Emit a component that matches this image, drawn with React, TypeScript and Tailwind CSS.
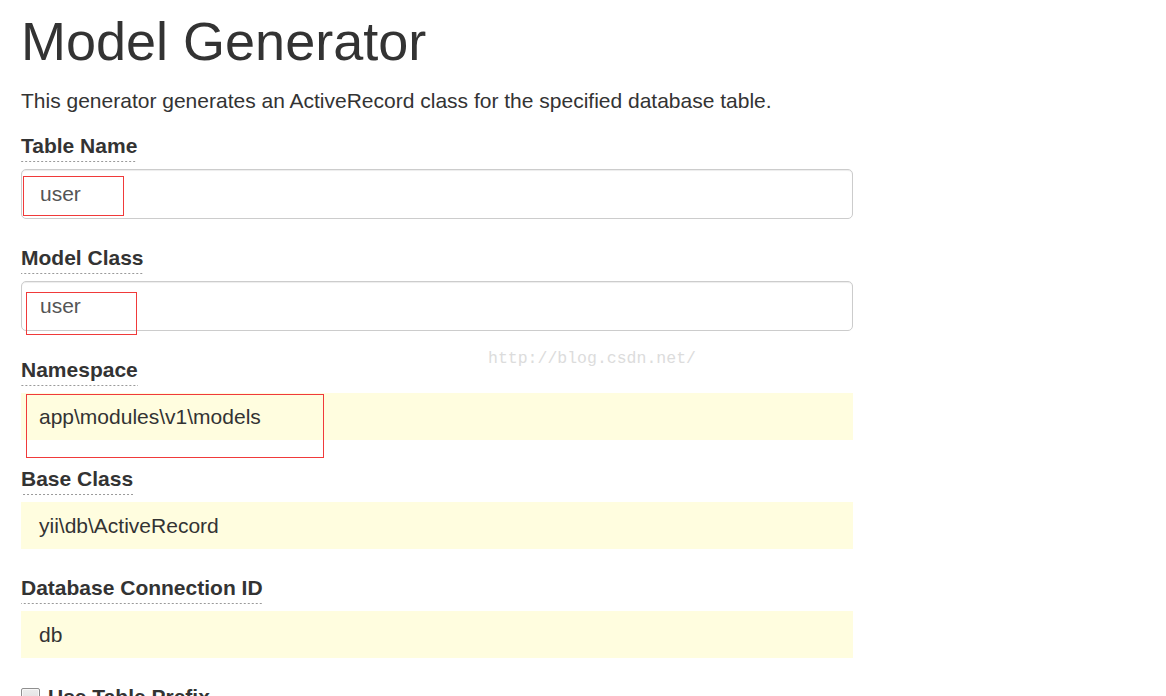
import React from "react";

const dash =
  "inline-block text-[21px] font-bold leading-[27px] pb-[3px] bg-[linear-gradient(to_right,#9a9a9a_50%,transparent_50%)] bg-[length:4px_1px] bg-repeat-x bg-bottom";

function Label({ text, first }: { text: string; first?: boolean }) {
  return (
    <div className={first ? "mt-[16px]" : "mt-[25px]"}>
      <span className={dash}>{text}</span>
    </div>
  );
}

function RedBox({ cls }: { cls: string }) {
  return <div className={"absolute border border-[#f03a3a] pointer-events-none " + cls} />;
}

export default function App() {
  return (
    <div className="relative h-[696px] w-[1166px] overflow-hidden bg-white text-[#333] font-['Liberation_Sans',Arial,sans-serif]">
      <div className="pl-[21px] pt-[11px] w-[853px]">
        <h1 className="text-[54px] leading-[60px] font-normal">Model Generator</h1>
        <p className="mt-[15px] text-[21px] leading-[30px]">
          This generator generates an ActiveRecord class for the specified database table.
        </p>

        <Label text="Table Name" first />
        <div className="relative mt-[7px] h-[50px] w-[832px] rounded-[5px] border border-[#cccccc] shadow-[inset_0_1px_1px_rgba(0,0,0,0.075)] flex items-center pl-[18px] text-[21px] text-[#555]">
          user
          <RedBox cls="left-[1px] top-[6px] w-[101px] h-[40px]" />
        </div>

        <Label text="Model Class" />
        <div className="relative mt-[7px] h-[50px] w-[832px] rounded-[5px] border border-[#cccccc] shadow-[inset_0_1px_1px_rgba(0,0,0,0.075)] flex items-center pl-[18px] text-[21px] text-[#555]">
          user
          <RedBox cls="left-[4px] top-[10px] w-[111px] h-[43px]" />
        </div>

        <Label text="Namespace" />
        <div className="relative mt-[7px] h-[47px] w-[832px] bg-[#fffddf] flex items-center pl-[18px] text-[21px] text-[#333]">
          app\modules\v1\models
          <RedBox cls="left-[5px] top-[1px] w-[298px] h-[64px]" />
        </div>

        <Label text="Base Class" />
        <div className="relative mt-[7px] h-[47px] w-[832px] bg-[#fffddf] flex items-center pl-[18px] text-[21px] text-[#333]">
          yii\db\ActiveRecord
        </div>

        <Label text="Database Connection ID" />
        <div className="relative mt-[7px] h-[47px] w-[832px] bg-[#fffddf] flex items-center pl-[18px] text-[21px] text-[#333]">
          db
        </div>

        <div className="mt-[30px] flex items-start gap-[8px]">
          <div className="w-[19px] h-[19px] shrink-0 border border-[#8f8f8f] rounded-[2px] bg-[linear-gradient(to_bottom,#ededed,#dcdcdc)] shadow-[inset_0_0_0_1px_#f8f8f8]" />
          <span className="text-[21px] font-bold leading-[29px] -mt-[6px]">Use Table Prefix</span>
        </div>
      </div>

      <div className="absolute left-[488px] top-[351px] text-[16.5px] leading-none text-[#dcdcdc] font-['Liberation_Mono',monospace] select-none">
        http://blog.csdn.net/
      </div>
    </div>
  );
}
